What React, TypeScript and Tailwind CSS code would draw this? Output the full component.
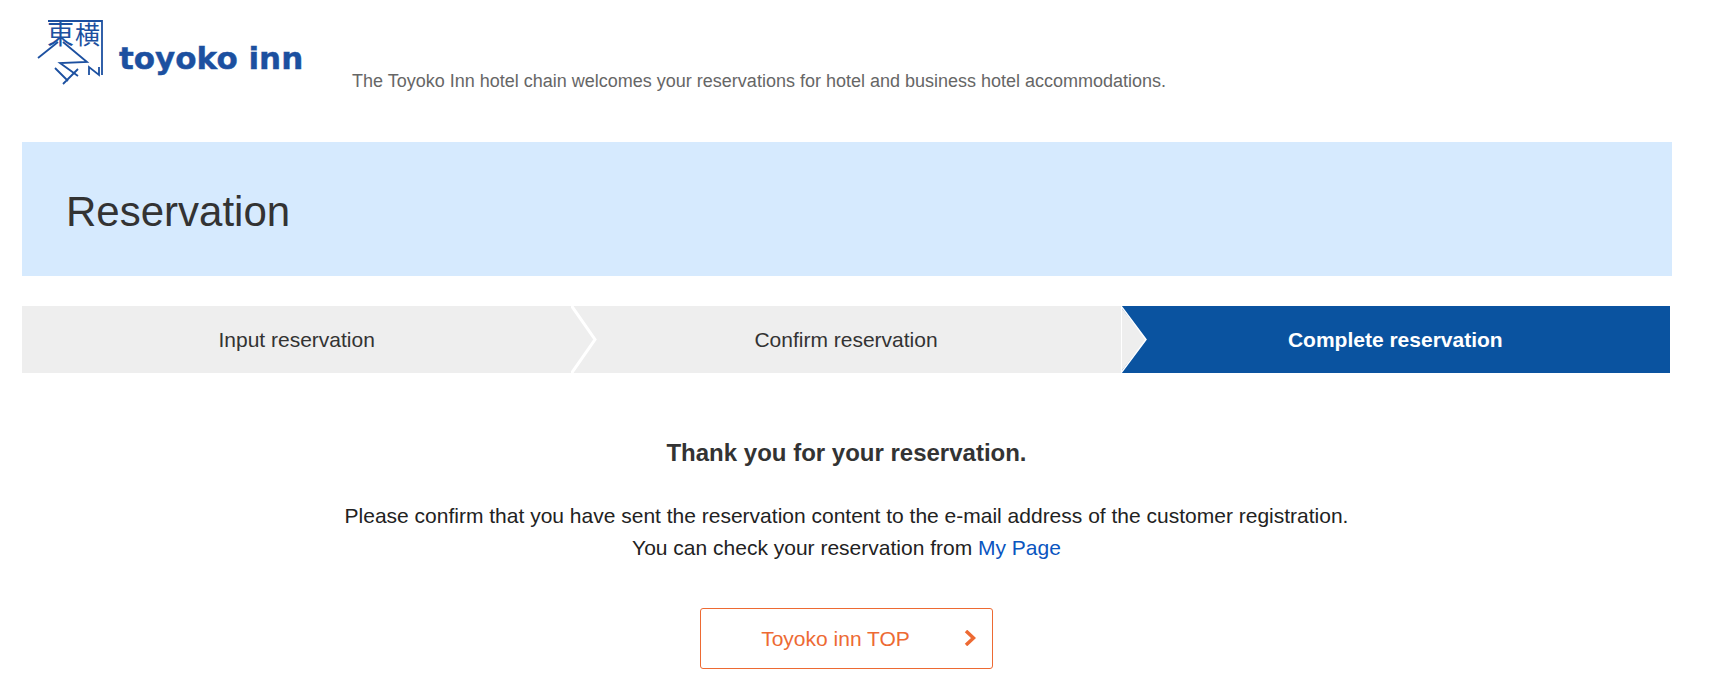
const Logo = () => (
  <svg width="320" height="96" viewBox="0 0 320 96" className="block">
    <g fill="none" stroke="#1c50a0" strokeWidth="1.8">
      <path d="M48 21H102V75" />
      <path d="M38 58L58 42" />
      <path d="M63 42L87 62L60 63L78 76" />
      <path d="M55 68L68 81M63 84L78 69" />
      <path d="M89 75V67L99 75V67" />
    </g>
    <text x="47" y="44" fontSize="27" fill="#1c50a0" fontFamily="'Noto Sans CJK JP', sans-serif" fontWeight="400">東</text>
    <text x="75" y="44" fontSize="25" fill="#1c50a0" fontFamily="'Noto Sans CJK JP', sans-serif" fontWeight="400">横</text>
    <text x="119" y="69" fontSize="31" fill="#1c50a0" stroke="#1c50a0" strokeWidth="0.4" fontFamily="'DejaVu Sans', sans-serif" fontWeight="700">toyoko inn</text>
  </svg>
);

const Step = ({ label, active, first }: { label: string; active?: boolean; first?: boolean }) => (
  <div className={`relative flex flex-1 items-center justify-center h-full ${active ? "bg-[#0a53a0] text-white font-bold" : "bg-[#eeeeee] text-[#333333]"}`}>
    {!first && (
      <svg width="28" height="67" viewBox="0 0 28 67" className="absolute left-0 top-0">
        {active ? (
          <>
            <path d="M-1 0L25 33.5L-1 67Z" fill="#eeeeee" />
            <path d="M0 0L25 33.5L0 67" fill="none" stroke="#ffffff" strokeWidth="1.5" />
            <path d="M0.5 0V67" stroke="#ffffff" strokeWidth="1" />
          </>
        ) : (
          <path d="M0 -1L24 33.5L0 68" fill="none" stroke="#ffffff" strokeWidth="3" />
        )}
      </svg>
    )}
    <span>{label}</span>
  </div>
);

export default function App() {
  return (
    <div className="min-h-[694px] bg-white font-['Liberation_Sans',Arial,sans-serif] text-[#333333] overflow-hidden">
      <header className="h-[142px] flex items-start">
        <div className="w-[352px] shrink-0">
          <Logo />
        </div>
        <p className="mt-[71px] text-[18px] leading-[20px] text-[#666666]">
          The Toyoko Inn hotel chain welcomes your reservations for hotel and business hotel accommodations.
        </p>
      </header>
      <div className="ml-[22px] w-[1650px] h-[134px] bg-[#d6eafe] flex items-center pl-[44px] pt-[6px]">
        <h1 className="text-[42px] leading-none font-normal">Reservation</h1>
      </div>
      <div className="ml-[22px] mt-[30px] w-[1648px] h-[67px] flex text-[21px]">
        <Step label="Input reservation" first />
        <Step label="Confirm reservation" />
        <Step label="Complete reservation" active />
      </div>
      <div className="w-[1693px] flex flex-col items-center">
        <p className="mt-[64px] text-[24px] leading-[32px] font-bold">Thank you for your reservation.</p>
        <p className="mt-[31px] text-[21px] leading-[32px] text-center text-[#222222]">
          Please confirm that you have sent the reservation content to the e-mail address of the customer registration.
          <br />
          You can check your reservation from <a className="text-[#0a55c0]">My Page</a>
        </p>
        <a className="relative mt-[44px] w-[293px] h-[61px] flex items-center justify-center pr-[22px] border border-[#ed6a33] rounded-[3px] text-[21px] text-[#ed6a33]">
          Toyoko inn TOP
          <svg width="12" height="16" viewBox="0 0 12 16" className="absolute right-[16px] top-[21px]">
            <path d="M2 1L9.5 8L2 15" fill="none" stroke="#ed6a33" strokeWidth="3.5" />
          </svg>
        </a>
      </div>
    </div>
  );
}
